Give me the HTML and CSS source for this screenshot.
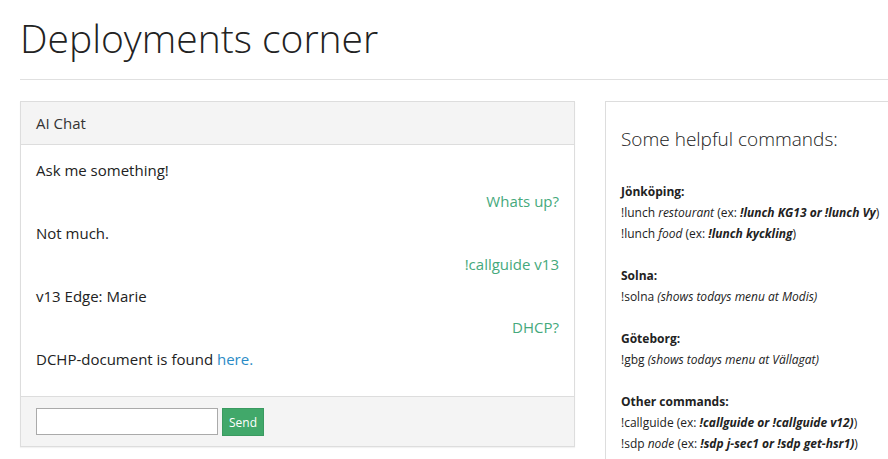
FILE: index.html
```html
<!DOCTYPE html>
<html>
<head>
<meta charset="utf-8">
<link rel="stylesheet" href="styles.css">
</head>
<body>
<div class="page">
  <h1 class="title">Deployments corner</h1>
  <hr class="rule">
  <div class="row">
    <div class="chat">
      <div class="chat-head">AI Chat</div>
      <div class="chat-body">
        <p class="msg bot">Ask me something!</p>
        <p class="msg me">Whats up?</p>
        <p class="msg bot">Not much.</p>
        <p class="msg me">!callguide v13</p>
        <p class="msg bot">v13 Edge: Marie</p>
        <p class="msg me">DHCP?</p>
        <p class="msg bot">DCHP-document is found <a class="link" href="#">here.</a></p>
      </div>
      <div class="chat-foot">
        <input class="chat-input" type="text">
        <button class="send">Send</button>
      </div>
    </div>
    <div class="help">
      <h2 class="help-title">Some helpful commands:</h2>
      <div class="help-text">
        <b>Jönköping:</b><br>
        !lunch <i>restourant</i> (ex: <b><i>!lunch KG13 or !lunch Vy</i></b>)<br>
        !lunch <i>food</i> (ex: <b><i>!lunch kyckling</i></b>)<br>
        <br>
        <b>Solna:</b><br>
        !solna <i>(shows todays menu at Modis)</i><br>
        <br>
        <b>Göteborg:</b><br>
        !gbg <i>(shows todays menu at Vällagat)</i><br>
        <br>
        <b>Other commands:</b><br>
        !callguide (ex: <b><i>!callguide or !callguide v12)</i></b>)<br>
        !sdp <i>node</i> (ex: <b><i>!sdp j-sec1 or !sdp get-hsr1)</i></b>)
      </div>
    </div>
  </div>
</div>
</body>
</html>
```

FILE: styles.css
```css
html, body {
  margin: 0;
  padding: 0;
  background: #fff;
  overflow: hidden;
}
body {
  font-family: "Open Sans", "Liberation Sans", sans-serif;
  color: #222;
}
.page {
  width: 1200px;
  padding: 0 20px;
}
.title {
  font-weight: 300;
  font-size: 39px;
  line-height: 1.1;
  margin: 17px 0 0 0;
  color: #222;
}
.rule {
  border: 0;
  border-top: 1px solid #e0e0e0;
  margin: 19px 0 21px 0;
}
.row {
  display: flex;
  gap: 30px;
  align-items: flex-start;
}
.chat {
  width: 553px;
  border: 1px solid #ddd;
  box-shadow: 0 1px 1px rgba(0,0,0,0.05);
}
.chat-head {
  background: #f4f4f4;
  border-bottom: 1px solid #ddd;
  height: 43px;
  box-sizing: border-box;
  padding: 11px 15px;
  font-size: 15px;
  line-height: 20px;
  color: #333;
}
.chat-body {
  background: #fff;
  padding: 10px 15px 21px 15px;
  border-bottom: 1px solid #ddd;
}
.msg {
  margin: 0;
  font-size: 15px;
  line-height: 31.5px;
  height: 31.5px;
}
.msg.bot { text-align: left; color: #222; }
.msg.me { text-align: right; color: #45a97c; }
.link { color: #2a8bc6; text-decoration: none; }
.chat-foot {
  background: #f4f4f4;
  height: 49px;
  box-sizing: border-box;
  padding: 10px 15px;
  display: flex;
  align-items: center;
  gap: 4px;
}
.chat-input {
  width: 182px;
  height: 27px;
  box-sizing: border-box;
  border: 1px solid #aaa;
  margin: 0;
  padding: 2px 4px;
  background: #fff;
}
.send {
  height: 28px;
  width: 42px;
  margin: 1px 0 0 0;
  padding: 0;
  border: 1px solid #3a9a60;
  background: #41a86a;
  color: #fff;
  font-family: "Open Sans", sans-serif;
  font-size: 12px;
}
.help {
  width: 400px;
  min-height: 400px;
  border: 1px solid #ddd;
  border-right: 0;
  padding: 23px 15px 0 15px;
}
.help-title {
  font-weight: 300;
  font-size: 19px;
  margin: 0 0 28px 0;
  color: #222;
  line-height: 28px;
}
.help-text {
  font-size: 12px;
  line-height: 21px;
  color: #222;
}
```
